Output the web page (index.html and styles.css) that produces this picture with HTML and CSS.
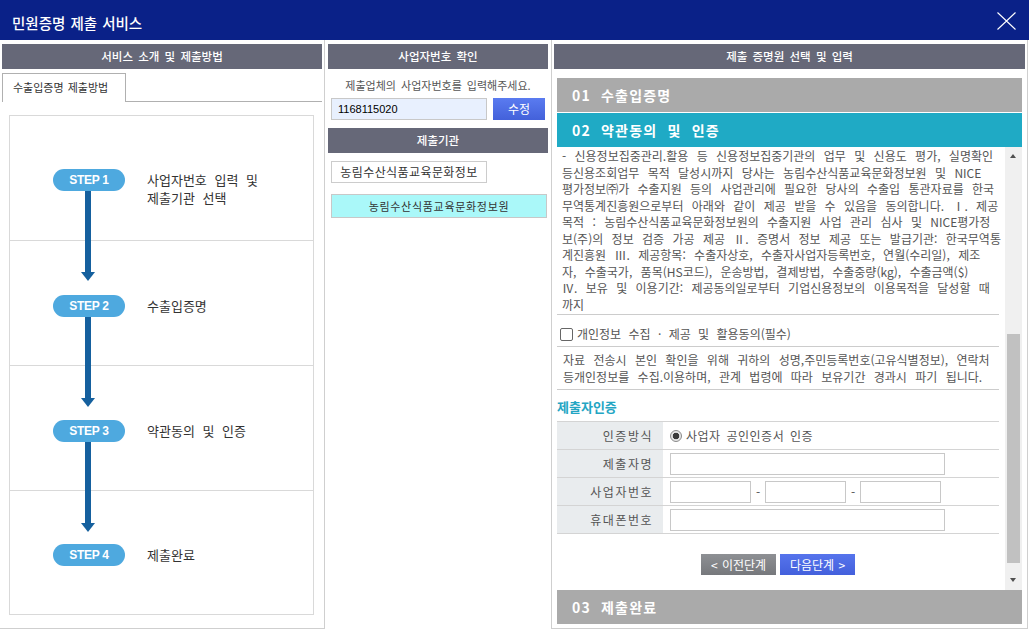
FILE: index.html
```html
<!DOCTYPE html>
<html lang="ko">
<head>
<meta charset="utf-8">
<title>민원증명 제출 서비스</title>
<link rel="stylesheet" href="styles.css">
</head>
<body>
<div class="window">
  <header class="titlebar">
    <h1 class="title">민원증명 제출 서비스</h1>
    <button class="close" type="button" aria-label="닫기">
      <svg width="19" height="18" viewBox="0 0 19 18"><path d="M0.5 0.5 L18.5 17.5 M18.5 0.5 L0.5 17.5" stroke="#ffffff" stroke-width="1.1" fill="none"/></svg>
    </button>
  </header>
  <main class="panels">
    <section class="panel panel-left">
      <h2 class="panel-head">서비스 소개 및 제출방법</h2>
      <div class="tabs"><span class="tab">수출입증명 제출방법</span><span class="tab-fill"></span></div>
      <ol class="steps">
        <li class="step"><span class="pill has-arrow">STEP 1</span><span class="step-label">사업자번호 입력 및<br>제출기관 선택</span></li>
        <li class="step"><span class="pill has-arrow">STEP 2</span><span class="step-label">수출입증명</span></li>
        <li class="step"><span class="pill has-arrow">STEP 3</span><span class="step-label">약관동의 및 인증</span></li>
        <li class="step"><span class="pill">STEP 4</span><span class="step-label">제출완료</span></li>
      </ol>
    </section>
    <section class="panel panel-mid">
      <h2 class="panel-head">사업자번호 확인</h2>
      <p class="hint">제출업체의 사업자번호를 입력해주세요.</p>
      <div class="bizno-row">
        <input class="bizno" type="text" value="1168115020">
        <button class="btn btn-edit" type="button">수정</button>
      </div>
      <h2 class="panel-head panel-head-org">제출기관</h2>
      <div class="org-select">농림수산식품교육문화정보</div>
      <div class="org-chosen">농림수산식품교육문화정보원</div>
    </section>
    <section class="panel panel-right">
      <h2 class="panel-head">제출 증명원 선택 및 입력</h2>
      <div class="accordion">
        <div class="acc-bar acc-done">01 수출입증명</div>
        <div class="acc-bar acc-active">02 약관동의 및 인증</div>
        <div class="acc-body">
          <div class="acc-scroll">
            <p class="terms">- 신용정보집중관리.활용 등 신용정보집중기관의 업무 및 신용도 평가, 실명확인<br>등신용조회업무 목적 달성시까지 당사는 농림수산식품교육문화정보원 및 NICE<br>평가정보㈜가 수출지원 등의 사업관리에 필요한 당사의 수출입 통관자료를 한국<br>무역통계진흥원으로부터 아래와 같이 제공 받을 수 있음을 동의합니다. Ⅰ. 제공<br>목적 : 농림수산식품교육문화정보원의 수출지원 사업 관리 심사 및 NICE평가정<br>보(주)의 정보 검증 가공 제공 Ⅱ. 증명서 정보 제공 또는 발급기관: 한국무역통<br>계진흥원 Ⅲ. 제공항목: 수출자상호, 수출자사업자등록번호, 연월(수리일), 제조<br>자, 수출국가, 품목(HS코드), 운송방법, 결제방법, 수출중량(kg), 수출금액($)<br>Ⅳ. 보유 및 이용기간: 제공동의일로부터 기업신용정보의 이용목적을 달성할 때<br>까지</p>
            <label class="agree"><span class="checkbox"></span>개인정보 수집 · 제공 및 활용동의(필수)</label>
            <p class="notice">자료 전송시 본인 확인을 위해 귀하의 성명,주민등록번호(고유식별정보), 연락처<br>등개인정보를 수집.이용하며, 관계 법령에 따라 보유기간 경과시 파기 됩니다.</p>
            <h3 class="auth-title">제출자인증</h3>
            <div class="auth-form">
              <div class="f-label">인증방식</div>
              <div class="f-value"><span class="radio"></span><span class="radio-text">사업자 공인인증서 인증</span></div>
              <div class="f-label">제출자명</div>
              <div class="f-value"><input class="field field-wide" type="text"></div>
              <div class="f-label">사업자번호</div>
              <div class="f-value"><input class="field field-short" type="text"><span class="dash">-</span><input class="field field-short" type="text"><span class="dash">-</span><input class="field field-short" type="text"></div>
              <div class="f-label">휴대폰번호</div>
              <div class="f-value"><input class="field field-wide" type="text"></div>
            </div>
            <div class="form-actions">
              <button class="btn btn-prev" type="button">&lt; 이전단계</button>
              <button class="btn btn-next" type="button">다음단계 &gt;</button>
            </div>
          </div>
          <div class="scrollbar">
            <span class="sb-btn sb-up"></span>
            <span class="sb-track"><span class="sb-thumb"></span></span>
            <span class="sb-btn sb-down"></span>
          </div>
        </div>
        <div class="acc-bar acc-done">03 제출완료</div>
      </div>
    </section>
  </main>
</div>
</body>
</html>
```
FILE: styles.css
```css
* { box-sizing: border-box; margin: 0; padding: 0; }
html, body { width: 1029px; height: 631px; overflow: hidden; background: #fff; }
body {
  font-family: "Noto Sans CJK KR", "Noto Sans", sans-serif;
  font-size: 12px;
  color: #555;
}
button, input { font-family: inherit; }

/* title bar */
.titlebar {
  height: 40px;
  background: #0a2188;
  display: flex;
  align-items: flex-start;
  justify-content: space-between;
  padding: 0 13px 0 12px;
}
.title {
  font-size: 14.5px;
  font-weight: 500;
  word-spacing: 1px;
  color: #fff;
  line-height: 20px;
  margin-top: 13px;
}
.close {
  border: 0;
  background: none;
  width: 19px;
  height: 18px;
  margin-top: 12px;
  display: block;
}
.close svg { display: block; }

/* panels */
.panels { display: flex; height: 589px; }
.panel { height: 100%; }
.panel-left {
  width: 325px;
  border-right: 1px solid #cfcfcf;
  border-bottom: 1px solid #cfcfcf;
  padding: 4px 2px 0 2px;
}
.panel-mid { width: 226px; padding: 4px 3px 0 3px; }
.panel-right {
  width: 477px;
  border: 1px solid #cfcfcf;
  border-top: 0;
  padding: 4px 2px 0 2px;
}
.panel-head {
  height: 25px;
  line-height: 25px;
  background: #666878;
  color: #fff;
  font-size: 11.5px;
  font-weight: 500;
  word-spacing: 2px;
  text-align: center;
}

/* left: tabs + steps */
.tabs { display: flex; height: 29px; margin-top: 4px; }
.tab {
  width: 124px;
  border: 1px solid #b0b0b0;
  border-bottom: 0;
  font-size: 11px;
  color: #333;
  line-height: 27px;
  padding-left: 10px;
  word-spacing: 1px;
}
.tab-fill { flex: 1; border-bottom: 1px solid #b0b0b0; }

.steps {
  list-style: none;
  margin: 13px 8px 0 7px;
  height: 500px;
  border: 1px solid #d9d9d9;
  display: flex;
  flex-direction: column;
}
.step {
  flex: 0 0 124px;
  display: flex;
  align-items: flex-start;
  padding: 53px 0 0 43px;
}
.step + .step { flex-basis: 125px; border-top: 1px solid #d9d9d9; padding-top: 54px; }
.step:last-child { flex: 1 1 auto; padding-top: 53px; }
.pill {
  position: relative;
  flex: 0 0 72px;
  height: 22px;
  border-radius: 11px;
  background: #4ea9df;
  color: #fff;
  font-family: "Liberation Sans", Arial, sans-serif;
  font-weight: bold;
  font-size: 12px;
  letter-spacing: -0.3px;
  line-height: 22px;
  text-align: center;
}
.has-arrow::after {
  content: "";
  position: absolute;
  left: 32px;
  top: 22px;
  width: 6px;
  height: 81px;
  background: #15609e;
}
.has-arrow::before {
  content: "";
  position: absolute;
  left: 28px;
  top: 103px;
  border-left: 7px solid transparent;
  border-right: 7px solid transparent;
  border-top: 9px solid #15609e;
}
.step-label {
  margin-left: 22px;
  padding-top: 2px;
  font-size: 13px;
  word-spacing: 4px;
  line-height: 18px;
  color: #333;
}

/* middle */
.hint {
  margin-top: 8px;
  text-align: center;
  font-size: 11px;
  line-height: 16px;
  word-spacing: 2px;
  color: #555;
}
.bizno-row { display: flex; gap: 6px; margin: 5px 0 0 3px; }
.bizno {
  width: 156px;
  height: 22px;
  border: 1px solid #c8c8c8;
  background: #e8f0fe;
  padding-left: 6px;
  font-family: "Liberation Sans", Arial, sans-serif;
  font-size: 11px;
  color: #000;
  outline: none;
}
.btn {
  border: 0;
  color: #fff;
  font-size: 12px;
  text-align: center;
  cursor: pointer;
}
.btn-edit {
  width: 52px;
  height: 22px;
  background: linear-gradient(#5a7bf0, #4361da);
  line-height: 20px;
}
.panel-head-org { margin-top: 8px; }
.org-select {
  width: 156px;
  height: 22px;
  margin: 8px 0 0 3px;
  border: 1px solid #cccccc;
  font-size: 12px;
  letter-spacing: 0.4px;
  line-height: 20px;
  color: #333;
  text-align: center;
  white-space: nowrap;
  overflow: hidden;
}
.org-chosen {
  width: 216px;
  height: 24px;
  margin: 11px 0 0 3px;
  border: 1px solid #c8c8c8;
  background: #aaf8f9;
  font-size: 11px;
  letter-spacing: 0.7px;
  line-height: 22px;
  color: #333;
  text-align: center;
}

/* right */
.accordion { margin: 9px 3px 0; }
.acc-bar {
  height: 34px;
  line-height: 34px;
  padding-left: 15px;
  color: #fff;
  font-weight: bold;
  font-size: 14px;
  letter-spacing: 1.2px;
  word-spacing: 5px;
}
.acc-done { background: #aaaaaa; }
.acc-active { background: #1faac5; margin-top: 1px; }
.acc-body { display: flex; height: 443px; }
.acc-scroll { flex: 1; overflow: hidden; padding-right: 6px; }

.terms {
  padding: 1px 0 1px 5px;
  line-height: 16.5px;
  white-space: nowrap;
  word-spacing: 5px;
  border-bottom: 1px solid #cccccc;
}
.agree {
  display: flex;
  align-items: center;
  padding: 10px 0 3px 3px;
  line-height: 18px;
  border-bottom: 1px solid #cccccc;
  word-spacing: 4px;
}
.checkbox {
  width: 13px;
  height: 13px;
  border: 1px solid #666;
  border-radius: 2px;
  background: #fff;
  margin-right: 4px;
}
.notice {
  padding: 5px 0 4px 6px;
  line-height: 16.5px;
  white-space: nowrap;
  word-spacing: 5px;
  border-bottom: 1px solid #cccccc;
}
.auth-title {
  margin: 8px 0 5px;
  font-size: 13px;
  font-weight: bold;
  color: #23a5c3;
  line-height: 18px;
}
.auth-form {
  display: grid;
  grid-template-columns: 106px 1fr;
  border-top: 1px solid #d4d4d4;
}
.f-label, .f-value { height: 28px; border-bottom: 1px solid #d4d4d4; }
.f-label {
  background: #e9ecee;
  text-align: right;
  padding-right: 10px;
  line-height: 27px;
  letter-spacing: 1.5px;
}
.f-value { display: flex; align-items: center; padding-left: 7px; }
.radio {
  width: 12px;
  height: 12px;
  border-radius: 50%;
  border: 1px solid #8a8a8a;
  background: radial-gradient(circle, #3a3a3a 0 3px, #e6e6e6 3.6px);
}
.radio-text { margin-left: 4px; letter-spacing: 0.5px; word-spacing: 2px; }
.field {
  height: 22px;
  border: 1px solid #c8c8c8;
  background: #fff;
  outline: none;
}
.field-wide { width: 275px; }
.field-short { width: 81px; }
.dash { width: 14px; text-align: center; }

.form-actions { display: flex; justify-content: center; gap: 4px; margin-top: 20px; }
.btn-prev, .btn-next { width: 75px; height: 21px; line-height: 21px; word-spacing: 1px; }
.btn-prev { background: linear-gradient(#8e9094, #76787c); }
.btn-next { background: linear-gradient(#5674ec, #4360dc); }

/* fake scrollbar */
.scrollbar {
  width: 17px;
  background: #f0f0f0;
  display: flex;
  flex-direction: column;
}
.sb-btn { height: 17px; position: relative; }
.sb-up::after, .sb-down::after {
  content: "";
  position: absolute;
  left: 5px;
  border-left: 3.5px solid transparent;
  border-right: 3.5px solid transparent;
}
.sb-up::after { top: 7px; border-bottom: 4px solid #505050; }
.sb-down::after { top: 5px; border-top: 4px solid #505050; }
.sb-track { flex: 1; padding-top: 170px; }
.sb-thumb { display: block; height: 229px; margin: 0 2px; background: #c1c1c1; }
```
